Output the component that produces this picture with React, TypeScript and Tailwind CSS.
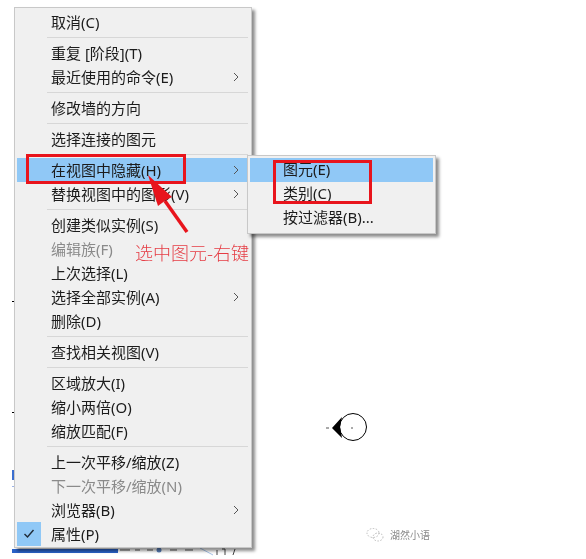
import React from "react";

type Item = { t: string; arrow?: boolean; dis?: boolean; hi?: boolean; check?: boolean } | "sep";

const items: Item[] = [
  { t: "取消(C)" }, "sep",
  { t: "重复 [阶段](T)" }, { t: "最近使用的命令(E)", arrow: true }, "sep",
  { t: "修改墙的方向" }, "sep",
  { t: "选择连接的图元" }, "sep",
  { t: "在视图中隐藏(H)", arrow: true, hi: true }, { t: "替换视图中的图形(V)", arrow: true }, "sep",
  { t: "创建类似实例(S)" }, { t: "编辑族(F)", dis: true }, { t: "上次选择(L)" }, { t: "选择全部实例(A)", arrow: true }, { t: "删除(D)" }, "sep",
  { t: "查找相关视图(V)" }, "sep",
  { t: "区域放大(I)" }, { t: "缩小两倍(O)" }, { t: "缩放匹配(F)" }, "sep",
  { t: "上一次平移/缩放(Z)" }, { t: "下一次平移/缩放(N)", dis: true }, { t: "浏览器(B)", arrow: true }, { t: "属性(P)", check: true },
];

const Chevron = () => (
  <svg width="7" height="10" viewBox="0 0 7 10" className="absolute right-[9px] top-[7px]">
    <path d="M1 1l4 4-4 4" fill="none" stroke="#555" strokeWidth="1" />
  </svg>
);

export default function App() {
  return (
    <div className="relative w-[586px] h-[559px] bg-white overflow-hidden blur-[0.35px] text-[15px] text-[#1c1c1c] font-['Noto_Sans','Noto_Sans_CJK_SC',sans-serif]">
      {/* drawing fragments behind the menu */}
      <div className="absolute left-[12px] top-[301px] w-[2px] h-px bg-black" />
      <div className="absolute left-[12px] top-[412px] w-[2px] h-px bg-black" />
      <div className="absolute left-[12px] top-[470px] w-[2px] h-[10px] bg-[#3b6fd0]" />
      <div className="absolute left-[12px] top-[486px] w-[2px] h-px bg-[#9db4e8]" />
      <div className="absolute left-[12px] top-[549px] w-[106px] h-[4px] bg-[#2a62c8]" />
      <svg className="absolute left-[118px] top-[546px]" width="124" height="13" viewBox="0 0 124 13">
        <path d="M2 4h10M17 4h5M29 4h6M52 4h7M67 4h8" stroke="#555" strokeWidth="1" fill="none" />
        <circle cx="41" cy="4" r="2.5" fill="#5a7fb8" />
        <path d="M82 2l13 7" stroke="#a9c4e8" strokeWidth="1" fill="none" />
        <path d="M99 4v5M104 3h3v6M117 3l-2 6" stroke="#444" strokeWidth="1" fill="none" />
      </svg>

      {/* main context menu */}
      <div className="absolute left-[14px] top-[7px] w-[238px] h-[541px] bg-[#f0f0f0] border border-[#c8c8c8] p-[2px] shadow-[3px_3px_3px_rgba(0,0,0,0.45)]">
        {items.map((it, i) =>
          it === "sep" ? (
            <div key={i} className="h-[7px] flex items-center pl-[30px] pr-[1px]">
              <div className="h-px w-full bg-[#d7d7d7]" />
            </div>
          ) : (
            <div
              key={i}
              className={`relative h-[24px] leading-[24px] pl-[34px] whitespace-nowrap ${it.hi ? "bg-[#90c8f6]" : ""} ${it.dis ? "text-[#8a8a8a]" : ""}`}
            >
              {it.check && (
                <div className="absolute left-0 top-0 w-[24px] h-[24px] bg-[#90c8f6] flex items-center justify-center">
                  <svg width="12" height="10" viewBox="0 0 12 10">
                    <path d="M1.5 5l3 3 6-7" fill="none" stroke="#1f2a36" strokeWidth="1.4" />
                  </svg>
                </div>
              )}
              {it.t}
              {it.arrow && <Chevron />}
            </div>
          )
        )}
      </div>

      {/* submenu */}
      <div className="absolute left-[247px] top-[155px] w-[189px] h-[79px] bg-[#f0f0f0] border border-[#c8c8c8] p-[2px] shadow-[3px_3px_3px_rgba(0,0,0,0.45)]">
        <div className="h-[24px] leading-[22px] pl-[33px] bg-[#90c8f6]">图元(E)</div>
        <div className="h-[24px] leading-[22px] pl-[33px]">类别(C)</div>
        <div className="h-[24px] leading-[22px] pl-[33px]">按过滤器(B)...</div>
      </div>

      {/* annotation */}
      <div className="absolute left-[26px] top-[154px] w-[160px] h-[30px] border-[3px] border-[#e8141c]" />
      <div className="absolute left-[273px] top-[160px] w-[99px] h-[44px] border-[3px] border-[#e8141c]" />
      <svg className="absolute left-[140px] top-[170px]" width="60" height="70" viewBox="0 0 60 70">
        <path d="M47 62L25 31" stroke="#e8141c" strokeWidth="3.5" fill="none" />
        <path d="M8 5L32 27 26 30 18 36Z" fill="#e8141c" />
      </svg>
      <div className="absolute left-[135px] top-[240px] text-[18px] leading-[24px] font-light text-[#e53c44] font-['Noto_Sans_CJK_SC',serif] whitespace-nowrap">
        选中图元-右键
      </div>

      {/* symbol */}
      <svg className="absolute left-[324px] top-[410px]" width="46" height="34" viewBox="0 0 46 34">
        <circle cx="29" cy="17" r="13.5" fill="none" stroke="#000" strokeWidth="1" />
        <path d="M8 18L18 7 16 17 18 28Z" fill="#000" />
        <path d="M2 18h3M27 18h2" stroke="#555" strokeWidth="1" />
      </svg>

      {/* watermark */}
      <div className="absolute left-[366px] top-[527px] flex items-center gap-[6px] text-[#8a8a8a]">
        <svg width="18" height="16" viewBox="0 0 18 16">
          <ellipse cx="7" cy="6" rx="6" ry="4.5" fill="none" stroke="#bbb" strokeDasharray="1.5 1.5" />
          <ellipse cx="12" cy="10" rx="5" ry="4" fill="none" stroke="#bbb" strokeDasharray="1.5 1.5" />
        </svg>
        <span className="text-[10px] leading-[16px]">湖然小语</span>
      </div>
    </div>
  );
}
